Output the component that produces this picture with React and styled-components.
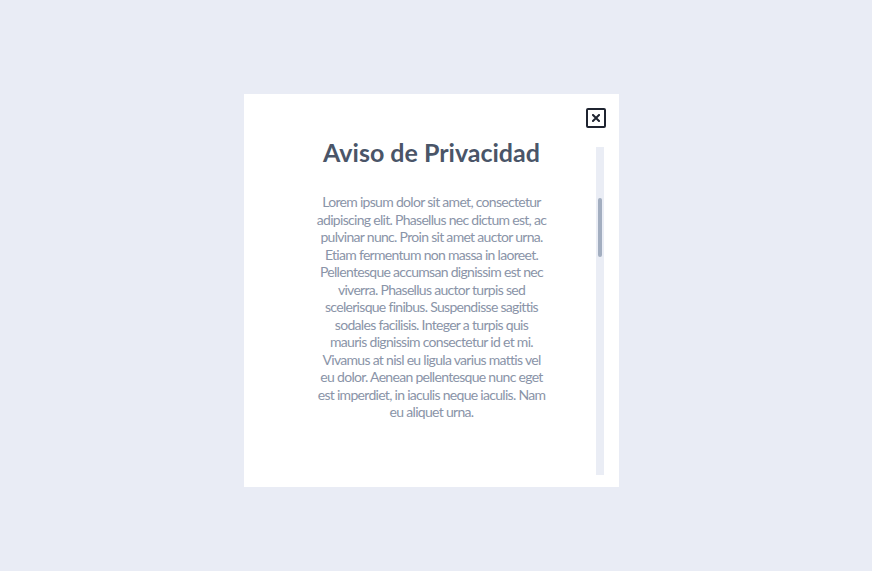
import React from 'react';
import styled, { createGlobalStyle } from 'styled-components';

const GlobalStyle = createGlobalStyle`
  html, body {
    margin: 0;
    padding: 0;
    background-color: #e9ecf5;
    font-family: Lato, "Open Sans", sans-serif;
  }
`;

const Page = styled.div`
  min-height: 100vh;
  box-sizing: border-box;
  padding: 94px 0 0 244px;
`;

const Modal = styled.div`
  position: relative;
  width: 375px;
  height: 393px;
  box-sizing: border-box;
  padding: 43px 15px 12px 23px;
  background-color: #ffffff;
  display: flex;
`;

const CloseButton = styled.button`
  position: absolute;
  top: 14px;
  right: 13px;
  width: 20px;
  height: 20px;
  padding: 0;
  box-sizing: border-box;
  border: 2px solid #1f2430;
  border-radius: 2px;
  background: #ffffff;
  display: flex;
  align-items: center;
  justify-content: center;
  cursor: pointer;
`;

const Content = styled.div`
  flex: 1;
  text-align: center;
`;

const Title = styled.h1`
  margin: 0;
  font-size: 25px;
  line-height: 30px;
  font-weight: 700;
  color: #4a5568;
`;

const Text = styled.p`
  max-width: 231px;
  margin: 26px auto 0;
  font-size: 14px;
  line-height: 17.5px;
  letter-spacing: -0.7px;
  color: #8a94a8;
`;

const Track = styled.div`
  width: 8px;
  margin-top: 10px;
  background-color: #eaedf5;
  display: flex;
  justify-content: center;
`;

const Thumb = styled.div`
  width: 4px;
  height: 59px;
  margin-top: ${(p) => p.offset}px;
  border-radius: 2px;
  background-color: #a3aec0;
`;

const CloseIcon = () => (
  <svg width="8" height="8" viewBox="0 0 8 8">
    <path d="M1 1 L7 7 M7 1 L1 7" stroke="#1f2430" strokeWidth="2" strokeLinecap="square" />
  </svg>
);

const App = () => (
  <>
    <GlobalStyle />
    <Page>
      <Modal>
        <CloseButton aria-label="Cerrar">
          <CloseIcon />
        </CloseButton>
        <Content>
          <Title>Aviso de Privacidad</Title>
          <Text>
            Lorem ipsum dolor sit amet, consectetur adipiscing elit. Phasellus nec dictum est, ac
            pulvinar nunc. Proin sit amet auctor urna. Etiam fermentum non massa in laoreet.
            Pellentesque accumsan dignissim est nec viverra. Phasellus auctor turpis sed scelerisque
            finibus. Suspendisse sagittis sodales facilisis. Integer a turpis quis mauris dignissim
            consectetur id et mi. Vivamus at nisl eu ligula varius mattis vel eu dolor. Aenean
            pellentesque nunc eget est imperdiet, in iaculis neque iaculis. Nam eu aliquet urna.
          </Text>
        </Content>
        <Track>
          <Thumb offset={51} />
        </Track>
      </Modal>
    </Page>
  </>
);

export default App;
